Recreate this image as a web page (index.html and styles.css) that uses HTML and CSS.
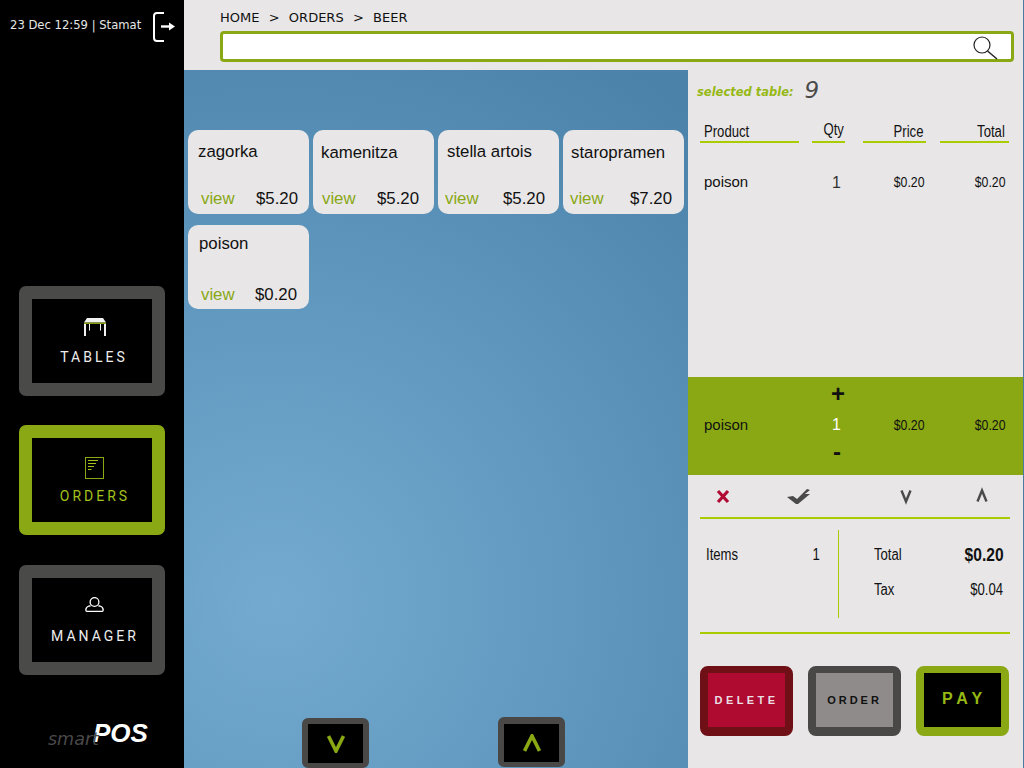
FILE: index.html
```html
<!DOCTYPE html>
<html lang="en">
<head>
    <meta charset="UTF-8">
    <meta name="viewport" content="width=device-width, initial-scale=1.0">
    <title>smartPOS Orders</title>
    <link rel="stylesheet" href="styles.css">
</head>
<body>
    <div class="app">
        <aside class="sidebar">
            <div class="status">
                <span class="status-text">23 Dec 12:59 | Stamat</span>
                <svg class="logout" width="24" height="32" viewBox="0 0 24 32">
                    <path d="M12 2H5Q2 2 2 5V27Q2 30 5 30H12" fill="none" stroke="#fff" stroke-width="2"/>
                    <path d="M9 15.5H19" stroke="#fff" stroke-width="2.4"/>
                    <path d="M17 11.5L23 15.5L17 19.5Z" fill="#fff"/>
                </svg>
            </div>
            <nav class="nav">
                <a class="nav-btn tables">
                    <span class="nav-inner">
                        <span class="nav-icon">
                            <svg width="24" height="18" viewBox="0 0 24 18">
                                <path d="M4 0H20L23 4.500H1Z" fill="#f2f2f2"/>
                                <path d="M1 5.200H23" stroke="#a3c21a" stroke-width="1.200"/>
                                <path d="M2 6V18M22 6V18" stroke="#f2f2f2" stroke-width="2"/>
                                <path d="M6.500 6V12.500M17.500 6V12.500" stroke="#f2f2f2" stroke-width="1"/>
                            </svg>
                        </span>
                        <span class="nav-label">TABLES</span>
                    </span>
                </a>
                <a class="nav-btn active">
                    <span class="nav-inner">
                        <span class="nav-icon">
                            <svg width="20" height="22" viewBox="0 0 20 22">
                                <rect x="0.5" y="0.5" width="18" height="21" fill="none" stroke="#8aa814"/>
                                <path d="M3 3.5H13M3 6.5H11M3 9.5H9M3 12.5H6.5" stroke="#a3c21a"/>
                            </svg>
                        </span>
                        <span class="nav-label">ORDERS</span>
                    </span>
                </a>
                <a class="nav-btn manager">
                    <span class="nav-inner">
                        <span class="nav-icon">
                            <svg width="20" height="15" viewBox="0 0 20 15">
                                <circle cx="9.500" cy="5" r="4.400" fill="none" stroke="#fff" stroke-width="1.300"/>
                                <path d="M5.500 9H4Q.8 10 .8 13Q.8 14.300 2 14.300H17Q18.200 14.300 18.200 13Q18.200 10 15 9H13.500" fill="none" stroke="#fff" stroke-width="1.300"/>
                            </svg>
                        </span>
                        <span class="nav-label">MANAGER</span>
                    </span>
                </a>
            </nav>
            <div class="logo"><span class="logo-smart">smart</span><span class="logo-pos">POS</span></div>
        </aside>

        <div class="content">
            <header class="topbar">
                <div class="breadcrumb">HOME&nbsp; &gt;&nbsp; ORDERS&nbsp; &gt;&nbsp; BEER</div>
                <div class="search">
                    <svg width="26" height="24" viewBox="0 0 26 24">
                        <circle cx="10" cy="9" r="8" fill="none" stroke="#222" stroke-width="1.2"/>
                        <path d="M15.5 15L25 23" stroke="#222" stroke-width="1.4"/>
                    </svg>
                </div>
            </header>

            <div class="work">
                <main class="main">
                    <section class="products">
                        <div class="card card-zagorka">
                            <div class="card-name">zagorka</div>
                            <div class="card-foot"><a class="view">view</a><span class="price">$5.20</span></div>
                        </div>
                        <div class="card card-kamenitza">
                            <div class="card-name">kamenitza</div>
                            <div class="card-foot"><a class="view">view</a><span class="price">$5.20</span></div>
                        </div>
                        <div class="card card-stella">
                            <div class="card-name">stella artois</div>
                            <div class="card-foot"><a class="view">view</a><span class="price">$5.20</span></div>
                        </div>
                        <div class="card card-staropramen">
                            <div class="card-name">staropramen</div>
                            <div class="card-foot"><a class="view">view</a><span class="price">$7.20</span></div>
                        </div>
                        <div class="card card-poison">
                            <div class="card-name">poison</div>
                            <div class="card-foot"><a class="view">view</a><span class="price">$0.20</span></div>
                        </div>
                    </section>
                    <div class="pager">
                        <a class="page-btn page-down">
                            <span class="page-inner">
                                <svg width="18" height="18" viewBox="0 0 18 18"><path d="M1.500 1L9 16L16.500 1" fill="none" stroke="#8aa814" stroke-width="3.600"/></svg>
                            </span>
                        </a>
                        <a class="page-btn">
                            <span class="page-inner">
                                <svg width="18" height="18" viewBox="0 0 18 18"><path d="M1.500 17L9 2L16.500 17" fill="none" stroke="#8aa814" stroke-width="3.600"/></svg>
                            </span>
                        </a>
                    </div>
                </main>

                <aside class="panel">
                    <div class="selected"><span class="selected-label">selected table:</span><span class="selected-num">9</span></div>

                    <div class="order-list">
                        <div class="cols head">
                            <div class="col-product"><span class="narrow">Product</span></div>
                            <div class="col-qty"><span class="narrow">Qty</span></div>
                            <div class="col-price"><span class="narrow">Price</span></div>
                            <div class="col-total"><span class="narrow">Total</span></div>
                        </div>
                        <div class="cols line">
                            <div class="col-product name">poison</div>
                            <div class="col-qty qty">1</div>
                            <div class="col-price"><span class="narrow">$0.20</span></div>
                            <div class="col-total"><span class="narrow">$0.20</span></div>
                        </div>
                    </div>

                    <div class="band">
                        <div class="cols band-row">
                            <div class="col-product name">poison</div>
                            <div class="col-qty band-qty">
                                <div class="plus">+</div>
                                <div class="band-num">1</div>
                                <div class="minus">-</div>
                            </div>
                            <div class="col-price"><span class="narrow">$0.20</span></div>
                            <div class="col-total"><span class="narrow">$0.20</span></div>
                        </div>
                    </div>

                    <div class="actions">
                        <svg width="24" height="24" viewBox="0 0 24 24"><path d="M7 7L17 18M17 7L7 18" stroke="#b10a35" stroke-width="3.2"/></svg>
                        <svg width="26" height="24" viewBox="0 0 26 24"><path d="M1 13L7 12L11 15L21 5L24 6L19 10L24 10L12 20H10Z" fill="#4a4a4a"/></svg>
                        <svg width="24" height="24" viewBox="0 0 24 24"><path d="M7.500 6.500L12 17.500L16.500 6.500" fill="none" stroke="#4a4a4a" stroke-width="2.400"/></svg>
                        <svg width="24" height="24" viewBox="0 0 24 24"><path d="M7.500 17.500L12 6.500L16.500 17.500" fill="none" stroke="#4a4a4a" stroke-width="2.400"/></svg>
                    </div>

                    <div class="summary">
                        <div class="summary-left">
                            <div class="sum-row"><span class="narrow">Items</span><span class="narrow right">1</span></div>
                        </div>
                        <div class="summary-right">
                            <div class="sum-row"><span class="narrow">Total</span><span class="narrow right grand">$0.20</span></div>
                            <div class="sum-row tax"><span class="narrow">Tax</span><span class="narrow right">$0.04</span></div>
                        </div>
                    </div>

                    <div class="buttons">
                        <a class="pay-btn delete"><span>DELETE</span></a>
                        <a class="pay-btn order"><span>ORDER</span></a>
                        <a class="pay-btn pay"><span>PAY</span></a>
                    </div>
                </aside>
            </div>
        </div>
    </div>
</body>
</html>
```

FILE: styles.css
```css
body {
    margin: 0;
    background-color: #4a7ba0;
    font-family: "Liberation Sans", Arial, sans-serif;
    color: #111;
}
a {
    cursor: pointer;
}
.app {
    display: flex;
    width: 1023px;
    height: 768px;
    overflow: hidden;
}

/* sidebar */
.sidebar {
    width: 184px;
    flex: none;
    display: flex;
    flex-direction: column;
    background: #000;
}
.status {
    height: 70px;
    display: flex;
    align-items: flex-start;
    padding-left: 10px;
}
.status-text {
    margin-top: 18px;
    font-family: "DejaVu Sans", Verdana, sans-serif;
    font-size: 11.6px;
    line-height: 14px;
    color: #e6e6e6;
    white-space: nowrap;
}
.logout {
    margin: 11px 0 0 11px;
}
.nav {
    margin: 216px 0 0 19px;
}
.nav-btn {
    display: block;
    width: 146px;
    height: 110px;
    box-sizing: border-box;
    border: 13px solid #4a4a48;
    border-radius: 7px;
    margin-bottom: 29px;
    color: #eee;
}
.nav-btn.active {
    border-color: #8aa814;
    color: #a3c21a;
}
.nav-btn.manager {
    margin-top: 30px;
}
.nav-inner {
    display: flex;
    flex-direction: column;
    align-items: center;
    height: 100%;
    background: #000;
}
.nav-icon {
    height: 23px;
    margin: 19px 0 0 5px;
}
.nav-label {
    margin-top: 8px;
    padding-left: 6px;
    font-family: Roboto, sans-serif;
    font-size: 14px;
    line-height: 16px;
    letter-spacing: 3px;
    white-space: nowrap;
}
.tables .nav-label {
    padding-left: 4px;
}
.logo {
    display: flex;
    align-items: flex-end;
    margin: auto 0 20px 48px;
    font-style: italic;
}
.logo-smart {
    position: relative;
    z-index: 1;
    font-family: "DejaVu Sans", sans-serif;
    font-size: 17.5px;
    line-height: 18px;
    color: #4a4a4a;
}
.logo-pos {
    margin-left: -6px;
    margin-bottom: 2px;
    font-size: 26px;
    line-height: 26px;
    font-weight: bold;
    color: #fff;
}

.content {
    flex: 1;
    display: flex;
    flex-direction: column;
}

/* top bar */
.topbar {
    height: 70px;
    box-sizing: border-box;
    padding: 11px 9px 0 36px;
    background: #e8e6e7;
}
.breadcrumb {
    font-family: "DejaVu Sans", Verdana, sans-serif;
    font-size: 13px;
    word-spacing: .5px;
    line-height: 14px;
    color: #111;
}
.search {
    display: flex;
    justify-content: flex-end;
    align-items: center;
    height: 31px;
    box-sizing: border-box;
    margin-top: 6px;
    padding: 2px 13px 0 0;
    border: 3px solid #8aa814;
    border-radius: 4px;
    background: #fff;
}

/* products */
.work {
    flex: 1;
    display: flex;
    min-height: 0;
}
.main {
    width: 504px;
    flex: none;
    display: flex;
    flex-direction: column;
    justify-content: space-between;
    background: radial-gradient(circle 640px at 18% 76%, #74aacf 0%, #6299c0 45%, #4a82aa 100%);
}
.products {
    display: flex;
    flex-wrap: wrap;
    gap: 11px 4px;
    padding: 60px 0 0 4px;
}
.card {
    width: 121px;
    height: 84px;
    box-sizing: border-box;
    display: flex;
    flex-direction: column;
    justify-content: space-between;
    padding: 12px 0 5px;
    border-radius: 10px;
    background: #e8e6e7;
    font-size: 16.8px;
    line-height: 20px;
}
.card-name {
    margin-left: var(--name);
}
.card-foot {
    display: flex;
    justify-content: space-between;
    padding: 0 var(--price) 0 var(--view);
}
.view {
    color: #8aa814;
}
.card-zagorka { --name: 10px; --view: 13px; --price: 11px; }
.card-kamenitza { --name: 8px; --view: 9px; --price: 15px; padding-top: 13px; }
.card-stella { --name: 9px; --view: 7px; --price: 14px; }
.card-staropramen { --name: 8px; --view: 7px; --price: 12px; padding-top: 13px; }
.card-poison { --name: 11px; --view: 13px; --price: 12px; padding-top: 9px; padding-bottom: 4px; }

.pager {
    display: flex;
    gap: 129px;
    padding-left: 118px;
}
.page-btn {
    display: block;
    width: 67px;
    height: 50px;
    box-sizing: border-box;
    border: 6px solid #4a4846;
    border-top-width: 7px;
    border-bottom-width: 5px;
    border-radius: 6px;
}
.page-down {
    margin-top: 1px;
    border-top-width: 6px;
}
.page-inner {
    display: flex;
    align-items: center;
    justify-content: center;
    height: 100%;
    background: #000;
}

/* order panel */
.panel {
    flex: 1;
    background: #e8e6e7;
}
.selected {
    height: 40px;
    display: flex;
    align-items: center;
    padding-left: 9px;
    font-family: "DejaVu Sans", Verdana, sans-serif;
    font-style: italic;
}
.selected-label {
    margin-top: 3px;
    font-size: 11.5px;
    font-weight: bold;
    color: #96b814;
}
.selected-num {
    margin: -1px 0 0 11px;
    font-size: 23px;
    color: #4a4a4a;
}
.order-list {
    height: 267px;
}
.cols {
    display: grid;
    grid-template-columns: 112px 51px 77px 69px;
    margin: 0 14px 0 12px;
    align-items: center;
}
.cols > :nth-child(1) { margin-right: 13px; }
.cols > :nth-child(2) { margin-right: 18px; }
.cols > :nth-child(3) { margin-right: 14px; }
.narrow {
    display: inline-block;
    transform: scaleX(.82);
    transform-origin: right center;
    white-space: nowrap;
}
.col-product .narrow {
    transform-origin: left center;
}
.col-product {
    padding-left: 4px;
}
.col-qty,
.col-price,
.col-total {
    text-align: right;
    font-size: 15px;
}
.col-qty {
    padding-right: 4px;
}
.col-price {
    padding-right: 1px;
}
.col-total {
    padding-right: 3px;
}
.head {
    height: 33px;
    align-items: stretch;
}
.head > div {
    border-bottom: 2px solid #a8cc00;
    height: 33px;
    box-sizing: border-box;
    font-size: 16px;
    line-height: 44px;
}
.head > .col-qty {
    padding-right: 1px;
    line-height: 39px;
}
.head > .col-price { padding-right: 3px; }
.head > .col-total { padding-right: 4px; }
.line {
    height: 26px;
    margin-top: 25px;
}
.name {
    font-size: 15px;
}
.qty {
    padding-top: 4px;
    font-size: 16px;
    color: #333;
}
.band {
    height: 98px;
    background: #8aa814;
    margin-right: -1px;
}
.band-row {
    height: 98px;
}
.band-row > .col-product,
.band-row > .col-price,
.band-row > .col-total {
    margin-top: -3px;
}
.band-qty {
    align-self: start;
    padding-right: 0;
    font-weight: bold;
}
.plus {
    height: 34px;
    font-size: 24px;
    line-height: 34px;
}
.band-num {
    height: 28px;
    padding-right: 4px;
    font-size: 16px;
    font-weight: normal;
    line-height: 28px;
    color: #fff;
}
.minus {
    height: 26px;
    padding-right: 4px;
    font-size: 24px;
    line-height: 26px;
}
.actions {
    display: grid;
    grid-template-columns: 75px 108px 76px 24px;
    align-items: center;
    height: 42px;
    margin: 0 13px 0 12px;
    padding-left: 11px;
    border-bottom: 2px solid #a8cc00;
}
.summary {
    display: flex;
    height: 115px;
    box-sizing: border-box;
    margin: 0 13px 0 12px;
    padding-top: 11px;
    border-bottom: 2px solid #a8cc00;
    font-size: 16px;
}
.summary-left {
    width: 139px;
    height: 88px;
    box-sizing: border-box;
    padding: 11px 18px 0 6px;
    border-right: 1px solid #a8cc00;
}
.summary-right {
    flex: 1;
    padding: 11px 6px 0 35px;
}
.sum-row {
    display: flex;
    justify-content: space-between;
    height: 28px;
    line-height: 28px;
}
.sum-row .narrow {
    transform-origin: left center;
}
.sum-row .right {
    transform-origin: right center;
}
.tax {
    margin-top: 7px;
    padding-right: 1px;
}
.grand {
    font-size: 19px;
    font-weight: bold;
}
.buttons {
    display: flex;
    gap: 15px;
    margin: 32px 0 0 12px;
}
.pay-btn {
    display: block;
    width: 93px;
    height: 70px;
    box-sizing: border-box;
    border: 8px solid;
    border-top-width: 7px;
    border-bottom-width: 9px;
    border-radius: 8px;
}
.pay-btn span {
    display: flex;
    align-items: center;
    justify-content: center;
    height: 100%;
    font-size: 11px;
    font-weight: bold;
    letter-spacing: 3px;
}
.delete {
    border-color: #6f1016;
}
.delete span {
    background: #af0a30;
    color: #eadfe2;
    letter-spacing: 3.4px;
}
.order {
    border-color: #4a4846;
}
.order span {
    background: #8e8b8a;
    color: #111;
}
.pay {
    border-color: #8aa814;
}
.pay span {
    box-sizing: border-box;
    padding: 0 0 2px 4px;
    background: #000;
    color: #96b814;
    font-size: 16px;
    letter-spacing: 5px;
}
```
